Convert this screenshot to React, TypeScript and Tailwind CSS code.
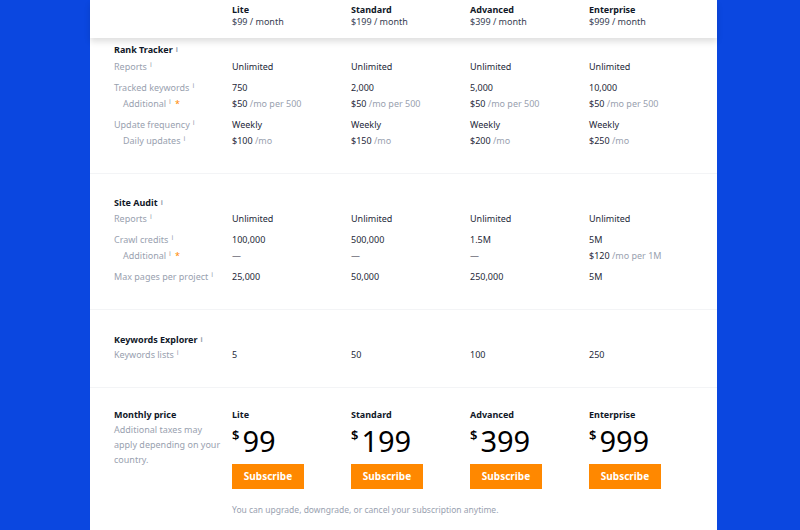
import React from "react";

const cols = "grid grid-cols-[118px_119px_119px_119px_119px]";
const I = () => <span className="text-[7px] text-gray-400 ml-[3px] align-top">i</span>;
const Star = () => <span className="text-[#ff8800] ml-[4px]">*</span>;

type Row = { label: string; sub?: boolean; star?: boolean; vals: React.ReactNode[]; mt: number };

function Section({ title, rows, pt, h }: { title: string; rows: Row[]; pt: string; h: string }) {
  return (
    <div className={`border-b border-gray-100 ${pt} ${h}`}>
      <div className="text-[9px] font-bold text-gray-900 h-[14px] leading-[14px] px-[24px]">{title}<I /></div>
      {rows.map((r, i) => (
        <div key={i} className={`${cols} px-[24px] items-center h-[14px]`} style={{ marginTop: r.mt }}>
          <div className={`text-[9px] text-gray-400 whitespace-nowrap ${r.sub ? "pl-[9px]" : ""}`}>{r.label}<I />{r.star && <Star />}</div>
          {r.vals.map((v, j) => <div key={j} className="text-[9px] text-gray-800 whitespace-nowrap">{v}</div>)}
        </div>
      ))}
    </div>
  );
}

const P = (a: string, b: string) => <span>{a} <span className="text-gray-400">{b}</span></span>;

export default function App() {
  return (
    <div className="w-[800px] h-[530px] bg-[#0b47e0] flex overflow-hidden" style={{ fontFamily: "'Noto Sans', 'Liberation Sans', sans-serif" }}>
      <div className="w-[627px] ml-[90px] bg-white relative h-full">
        <div className={`${cols} px-[24px] h-[38px] pt-[4px] shadow-[0_4px_6px_rgba(0,0,0,0.12)] relative z-10 bg-white`}>
          <div />
          {[["Lite", "$99"], ["Standard", "$199"], ["Advanced", "$399"], ["Enterprise", "$999"]].map(([n, p]) => (
            <div key={n} className="text-[9px] leading-[12px]">
              <div className="font-bold text-gray-900">{n}</div>
              <div className="text-gray-700">{p} / month</div>
            </div>
          ))}
        </div>
        <Section title="Rank Tracker" pt="pt-[5px]" h="h-[136px]" rows={[
          { label: "Reports", vals: ["Unlimited", "Unlimited", "Unlimited", "Unlimited"], mt: 3 },
          { label: "Tracked keywords", vals: ["750", "2,000", "5,000", "10,000"], mt: 7 },
          { label: "Additional", sub: true, star: true, vals: Array(4).fill(P("$50", "/mo per 500")), mt: 2 },
          { label: "Update frequency", vals: ["Weekly", "Weekly", "Weekly", "Weekly"], mt: 7 },
          { label: "Daily updates", sub: true, vals: [P("$100", "/mo"), P("$150", "/mo"), P("$200", "/mo"), P("$250", "/mo")], mt: 2 },
        ]} />
        <Section title="Site Audit" pt="pt-[22px]" h="h-[136px]" rows={[
          { label: "Reports", vals: ["Unlimited", "Unlimited", "Unlimited", "Unlimited"], mt: 2 },
          { label: "Crawl credits", vals: ["100,000", "500,000", "1.5M", "5M"], mt: 7 },
          { label: "Additional", sub: true, star: true, vals: ["—", "—", "—", P("$120", "/mo per 1M")], mt: 2 },
          { label: "Max pages per project", vals: ["25,000", "50,000", "250,000", "5M"], mt: 7 },
        ]} />
        <Section title="Keywords Explorer" pt="pt-[23px]" h="h-[78px]" rows={[
          { label: "Keywords lists", vals: ["5", "50", "100", "250"], mt: 1 },
        ]} />
        <div className={`${cols} px-[24px] pt-[19px]`}>
          <div className="text-[9px] leading-[15px]">
            <div className="font-bold text-gray-900">Monthly price</div>
            <div className="text-gray-400 w-[112px]">Additional taxes may apply depending on your country.</div>
          </div>
          {[["Lite", "99"], ["Standard", "199"], ["Advanced", "399"], ["Enterprise", "999"]].map(([n, p]) => (
            <div key={n}>
              <div className="text-[9px] font-bold text-gray-900 leading-[15px]">{n}</div>
              <div className="flex items-start h-[32px] mt-[3px] text-black">
                <span className="text-[13px] font-semibold mt-[1px] mr-[3px]">$</span>
                <span className="text-[29px] leading-[32px]">{p}</span>
              </div>
              <div className="mt-[7px] w-[72px] h-[25px] bg-[#ff8800] text-white text-[10px] font-bold flex items-center justify-center">Subscribe</div>
            </div>
          ))}
        </div>
        <div className="pl-[142px] pt-[15px] text-[8.5px] text-gray-400">You can upgrade, downgrade, or cancel your subscription anytime.</div>
      </div>
    </div>
  );
}
